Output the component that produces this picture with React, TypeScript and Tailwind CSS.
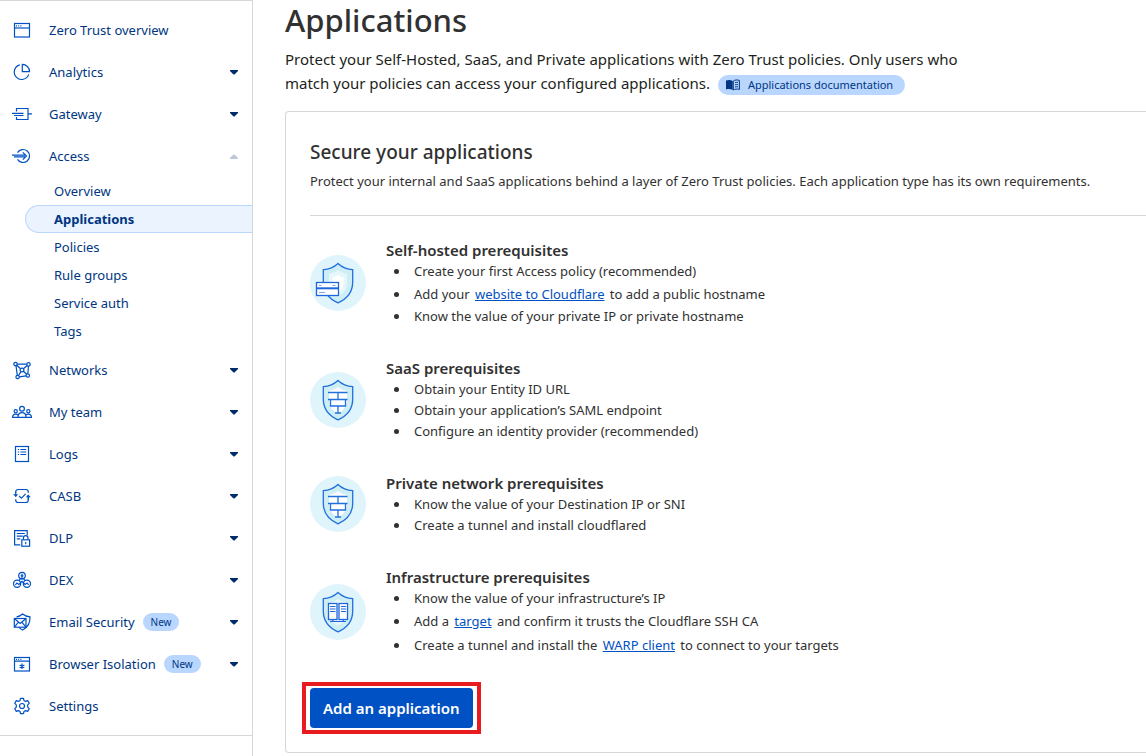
import type { ReactNode } from "react";

const FONT = "font-['Noto_Sans','Open_Sans',sans-serif]";

function Icon({ children }: { children: ReactNode }) {
  return (
    <svg
      viewBox="0 0 20 20"
      className="size-5 shrink-0 text-[#0051c3]"
      fill="none"
      stroke="currentColor"
      strokeWidth="1.2"
      aria-hidden="true"
    >
      {children}
    </svg>
  );
}

const icons = {
  overview: (
    <Icon>
      <rect x="2.5" y="3.5" width="15" height="13.5" />
      <path d="M2.5 8h15" />
      <path d="M4 5.8h1M6.2 5.8h1M8.4 5.8h1" />
    </Icon>
  ),
  analytics: (
    <Icon>
      <path d="M7.8 2.9A7.4 7.4 0 1 0 16.7 12.4" />
      <path d="M10.3 2.4v7.2h7.2a7.2 7.2 0 0 0-7.2-7.2z" />
    </Icon>
  ),
  gateway: (
    <Icon>
      <path d="M4.5 7.5v-3h11.5v11H4.5v-2.5M16 9.8h4" />
      <path d="M0 9.3h11.5M2 11.5h9.5" />
    </Icon>
  ),
  access: (
    <Icon>
      <path d="M5.5 6.6a6.5 6.5 0 1 1 0 6.8" />
      <path d="M0 9.1h13M2 10.9h11M10.8 6.3l3.7 3.7-3.7 3.7" />
    </Icon>
  ),
  networks: (
    <Icon>
      <circle cx="3.5" cy="4" r="1.7" />
      <circle cx="16.5" cy="4.4" r="1.7" />
      <circle cx="15.8" cy="15.5" r="1.7" />
      <circle cx="5.6" cy="17" r="1.7" />
      <circle cx="10" cy="10" r="1.9" />
      <path d="M5.2 4.1h9.6M16.4 6.1l-.5 7.7M7.3 16.8l6.8-1M4 5.7l1.3 9.6M4.8 5.2l3.8 3.5M15.2 5.5l-3.8 3.2M11.4 11.3l3.2 3M8.9 11.6l-2.4 3.9" />
    </Icon>
  ),
  team: (
    <Icon>
      <circle cx="10" cy="6.7" r="2.4" />
      <circle cx="3.7" cy="9.3" r="1.6" />
      <circle cx="16.3" cy="9.3" r="1.6" />
      <path d="M6 15.3c0-3 1.5-4.7 4-4.7s4 1.7 4 4.7M.6 15.3c0-2 1.2-3.2 3.1-3.2 1 0 1.8.3 2.4 1M19.4 15.3c0-2-1.2-3.2-3.1-3.2-1 0-1.8.3-2.4 1M0 15.4h20" />
    </Icon>
  ),
  logs: (
    <Icon>
      <rect x="3.5" y="2.5" width="13" height="15" />
      <path d="M5.8 5.5h1.3M5.8 8h1.3M5.8 10.5h1.3M8.4 5.5h5.8M8.4 8h5.8M8.4 10.5h5.8" />
    </Icon>
  ),
  casb: (
    <Icon>
      <path d="M3.7 7V6a2.5 2.5 0 0 1 2.5-2.5h7.6A2.5 2.5 0 0 1 16.3 6v.8M3.7 13.2v.8a2.5 2.5 0 0 0 2.5 2.5h7.6a2.5 2.5 0 0 0 2.5-2.5v-4" />
      <path d="M3.7 6v4.5M16.3 14V9.5" />
      <path d="M1.2 8.3h5L3.7 11zM13.8 11.2h5l-2.5-2.7z" fill="currentColor" stroke="none" />
      <path d="M7 9.8l2.4 2.4 4.2-4.4" />
    </Icon>
  ),
  dlp: (
    <Icon>
      <path d="M8.3 16.8H2.6V2.6h12.6v4.6" />
      <path d="M4.8 5.5h8M4.8 8.2h6M4.8 10.8h3.5" />
      <rect x="9.8" y="11.8" width="7.8" height="6.4" />
      <path d="M11.4 11.6V10a2.3 2.3 0 0 1 4.6 0v1.6M13.7 14v2.2" />
    </Icon>
  ),
  dex: (
    <Icon>
      <circle cx="10" cy="5.6" r="3.3" />
      <circle cx="5.1" cy="13.8" r="3.6" />
      <circle cx="14.9" cy="13.8" r="3.6" />
      <path d="M10 3.8v5.6M8.6 5.8h2.8M3.4 15l1.5-2 2 1.4 3.1-3 3.1 3 2-1.4 1.5 2M8.4 9l-1.5 1.6M11.6 9l1.5 1.6" />
    </Icon>
  ),
  email: (
    <Icon>
      <path d="M4.5 4.8C6.6 4.6 8.6 3.8 10.6 2c2 1.8 4.6 2.6 7.4 2.8.3 6-1.6 10.4-7.4 13.2-1.4-.7-2.5-1.5-3.4-2.4" />
      <rect x="2.3" y="6.5" width="11.7" height="8.7" />
      <path d="M2.3 6.5l5.9 5 5.8-5M2.3 15.2l4.2-5M14 15.2l-4.2-5" />
    </Icon>
  ),
  browser: (
    <Icon>
      <rect x="2.5" y="3.5" width="15" height="13.5" />
      <path d="M2.5 7.2h15M4 5.4h1M6.2 5.4h1M8.4 5.4h1" />
      <path d="M10 9.5v5.4M7.6 10.9l4.8 2.7M12.4 10.9l-4.8 2.7" />
    </Icon>
  ),
  settings: (
    <Icon>
      <circle cx="10" cy="10" r="2.5" />
      <path
        d="M8.5 2.3h3l.5 2.2 1.5.9 2.2-.8 1.6 2.6-1.6 1.7v2.2l1.6 1.7-1.6 2.6-2.2-.8-1.5.9-.5 2.2h-3L8 15.5l-1.5-.9-2.2.8-1.6-2.6 1.6-1.7V8.9L2.7 7.2l1.6-2.6 2.2.8L8 4.5z"
        strokeLinejoin="round"
      />
    </Icon>
  ),
};

type NavItem = {
  label: string;
  icon: ReactNode;
  menu?: boolean;
  badge?: boolean;
  children?: string[];
};

const NAV: NavItem[] = [
  { label: "Zero Trust overview", icon: icons.overview },
  { label: "Analytics", icon: icons.analytics, menu: true },
  { label: "Gateway", icon: icons.gateway, menu: true },
  {
    label: "Access",
    icon: icons.access,
    menu: true,
    children: ["Overview", "Applications", "Policies", "Rule groups", "Service auth", "Tags"],
  },
  { label: "Networks", icon: icons.networks, menu: true },
  { label: "My team", icon: icons.team, menu: true },
  { label: "Logs", icon: icons.logs, menu: true },
  { label: "CASB", icon: icons.casb, menu: true },
  { label: "DLP", icon: icons.dlp, menu: true },
  { label: "DEX", icon: icons.dex, menu: true },
  { label: "Email Security", icon: icons.email, menu: true, badge: true },
  { label: "Browser Isolation", icon: icons.browser, menu: true, badge: true },
  { label: "Settings", icon: icons.settings },
];

function Caret({ open }: { open: boolean }) {
  return (
    <svg
      viewBox="0 0 8 5"
      className={open ? "ml-auto h-[5px] w-2 rotate-180 text-[#bcc8da]" : "ml-auto h-[5px] w-2 text-[#002b6b]"}
      fill="currentColor"
      aria-hidden="true"
    >
      <path d="M0 0h8v1L4.5 4.6h-1L0 1z" />
    </svg>
  );
}

function NavRow({ item }: { item: NavItem }) {
  const rowClass = "flex h-[42px] w-full items-center pr-3.5 pl-3 text-left";
  const content = (
    <>
      {item.icon}
      <span className="ml-[17px] pt-0.5">{item.label}</span>
      {item.badge && (
        <span className="ml-2 rounded-full bg-[#b9d6ff] px-2 text-[10px] leading-[18px]">New</span>
      )}
      {item.menu && <Caret open={Boolean(item.children)} />}
    </>
  );
  return (
    <li>
      {item.menu ? (
        <button type="button" className={rowClass} aria-expanded={Boolean(item.children)}>
          {content}
        </button>
      ) : (
        <a href="#" className={rowClass}>
          {content}
        </a>
      )}
      {item.children && (
        <ul className="pb-1 pl-[25px]">
          {item.children.map((child) => (
            <li key={child}>
              <a
                href="#"
                className={
                  child === "Applications"
                    ? "flex h-7 items-center rounded-l-full border border-r-0 border-[#b9d6ff] bg-[#ebf3ff] pt-0.5 pl-7 font-bold"
                    : "flex h-7 items-center border border-r-0 border-transparent pt-0.5 pl-7"
                }
              >
                {child}
              </a>
            </li>
          ))}
        </ul>
      )}
    </li>
  );
}

const SHIELD =
  "M28 8.5C24 12.3 19 14.3 13.3 14.6V27c0 10.5 6 17 14.7 20.8C36.7 44 42.7 37.5 42.7 27V14.6C37 14.3 32 12.3 28 8.5z";
const SHIELD_INNER =
  "M28 15c-2.5 2.2-5.5 3.3-9 3.7V27c0 7.3 3.5 11.7 9 14.7 5.5-3 9-7.4 9-14.7v-8.3c-3.5-.4-6.5-1.5-9-3.7z";
const SHIELD_CORE =
  "M28 20c-1.8 1.2-3.5 1.9-5.5 2.2V28c0 4.5 2 7.3 5.5 9.3 3.5-2 5.5-4.8 5.5-9.3v-5.8c-2-.3-3.7-1-5.5-2.2z";

function Emblem({ kind }: { kind: "card" | "wall" | "servers" }) {
  return (
    <svg viewBox="0 0 56 56" className="mb-px size-14 shrink-0" fill="none" aria-hidden="true">
      <circle cx="28" cy="28" r="28" fill="#e0f4fb" />
      <path d={SHIELD} fill="#cdeef5" stroke="#2170e0" strokeWidth="1.3" />
      <path d={SHIELD_INNER} fill={kind === "wall" ? "#ffffff" : "#e6f7fb"} />
      {kind === "card" && (
        <>
          <path d={SHIELD_CORE} fill="#ffffff" />
          <rect x="6.5" y="27.5" width="22" height="13" fill="#ffffff" stroke="#1f66dd" strokeWidth="1.3" />
          <path d="M6.5 33.3h22" stroke="#1f66dd" strokeWidth="2" />
          <path d="M9 30.5h2.5M22.5 30.5h3M9 37.5h6" stroke="#7ba8ec" />
        </>
      )}
      {kind === "wall" && (
        <path
          d="M18 20.5h19.5M18 27.5h19.5M20.5 27.5v6.5h15v-6.5M28 20.5v7M28 34v7M25 41h6"
          stroke="#2170e0"
          strokeWidth="1.3"
        />
      )}
      {kind === "servers" && (
        <>
          <rect x="18.5" y="19.5" width="8.5" height="16" fill="#ffffff" stroke="#1f66dd" strokeWidth="1.3" />
          <rect x="29" y="19.5" width="8.5" height="16" fill="#ffffff" stroke="#1f66dd" strokeWidth="1.3" />
          <path
            d="M20 22.5h5.5M20 25h5.5M20 27.5h5.5M31 22.5h5M31 25h5M31 27.5h5M22.8 35.5v2M33.2 35.5v2M20 37.5h16M26 37.5h4"
            stroke="#1f66dd"
            strokeWidth="1.2"
          />
        </>
      )}
    </svg>
  );
}

const LINK = "mx-0.5 text-[#0051c3] underline";

type Item = { content: ReactNode; tall?: boolean };

const SECTIONS: { title: string; kind: "card" | "wall" | "servers"; items: Item[] }[] = [
  {
    title: "Self-hosted prerequisites",
    kind: "card",
    items: [
      { content: "Create your first Access policy (recommended)" },
      {
        tall: true,
        content: (
          <>
            Add your <a href="#" className={LINK}>website to Cloudflare</a> to add a public hostname
          </>
        ),
      },
      { content: "Know the value of your private IP or private hostname" },
    ],
  },
  {
    title: "SaaS prerequisites",
    kind: "wall",
    items: [
      { content: "Obtain your Entity ID URL" },
      { content: "Obtain your application’s SAML endpoint" },
      { content: "Configure an identity provider (recommended)" },
    ],
  },
  {
    title: "Private network prerequisites",
    kind: "wall",
    items: [
      { content: "Know the value of your Destination IP or SNI" },
      { content: "Create a tunnel and install cloudflared" },
    ],
  },
  {
    title: "Infrastructure prerequisites",
    kind: "servers",
    items: [
      { content: "Know the value of your infrastructure’s IP" },
      {
        tall: true,
        content: (
          <>
            Add a <a href="#" className={LINK}>target</a> and confirm it trusts the Cloudflare SSH CA
          </>
        ),
      },
      {
        tall: true,
        content: (
          <>
            Create a tunnel and install the <a href="#" className={LINK}>WARP client</a> to connect to your targets
          </>
        ),
      },
    ],
  },
];

const BULLET =
  "before:mr-[15px] before:mb-0.5 before:-ml-5 before:inline-block before:size-[5px] before:rounded-full before:bg-[#313131] before:align-middle before:content-['']";

export default function App() {
  return (
    <div className={`${FONT} flex min-h-screen overflow-x-hidden bg-white text-[#313131]`}>
      <aside className="w-[253px] shrink-0 border-t border-r border-[#d5d7d8] text-[13px] text-[#003681]">
        <nav aria-label="Zero Trust" className="border-b border-[#d5d7d8] py-2">
          <ul>
            {NAV.map((item) => (
              <NavRow key={item.label} item={item} />
            ))}
          </ul>
        </nav>
      </aside>

      <main className="min-w-0 flex-1 pb-[3px] pl-8">
        <h1 className="text-[31px] leading-10 font-medium">Applications</h1>
        <p className="mt-[7px] max-w-[700px] text-[15px] leading-6 text-[#1d1f20]">
          Protect your Self-Hosted, SaaS, and Private applications with Zero Trust policies. Only users who match
          your policies can access your configured applications.{" "}
          <a
            href="#"
            className="ml-1 inline-flex h-5 items-center gap-2 rounded-full bg-[#b9d6ff] pr-3 pl-2 align-middle text-[11px] leading-4 text-[#003681]"
          >
            <svg viewBox="0 0 14 12" className="h-3 w-3.5" aria-hidden="true">
              <path d="M0 1.5C2.5.6 5 .8 6.7 2v9C5 10 2.5 9.8 0 10.5z" fill="#003681" />
              <path
                d="M7.3 2C9 .8 11 .7 13.4 1.4v9C11 9.8 9 10 7.3 11zM9 3.7c1-.4 2-.5 3-.3M9 5.9c1-.4 2-.5 3-.3M9 8.1c1-.4 2-.5 3-.3"
                fill="none"
                stroke="#003681"
              />
            </svg>
            Applications documentation
          </a>
        </p>

        <section className="mt-4 rounded-l border border-r-0 border-[#d5d7d8] pt-6 pb-[18px] pl-6">
          <h2 className="text-[19px] leading-8 font-medium">Secure your applications</h2>
          <p className="mt-px text-[13px] leading-6">
            Protect your internal and SaaS applications behind a layer of Zero Trust policies. Each application type
            has its own requirements.
          </p>
          <hr className="mt-[22px] border-[#d5d7d8]" />

          <div className="mt-6 flex flex-col gap-[31px]">
            {SECTIONS.map((section) => (
              <div key={section.title} className="flex items-center gap-5">
                <Emblem kind={section.kind} />
                <div>
                  <h3 className="mb-px text-[15px] leading-5 font-semibold">{section.title}</h3>
                  <ul className="pl-7 text-[13px]">
                    {section.items.map((item, index) => (
                      <li key={index} className={`${BULLET} ${item.tall ? "leading-6" : "leading-[21px]"}`}>
                        {item.content}
                      </li>
                    ))}
                  </ul>
                </div>
              </div>
            ))}
          </div>

          <div className="mt-[25px] -ml-2 w-fit border-4 border-[#e81b1f] px-1 py-0.5">
            <button
              type="button"
              className="h-10 rounded bg-[#0051c3] px-[13px] text-[15px] font-semibold text-white"
            >
              Add an application
            </button>
          </div>
        </section>
      </main>
    </div>
  );
}
